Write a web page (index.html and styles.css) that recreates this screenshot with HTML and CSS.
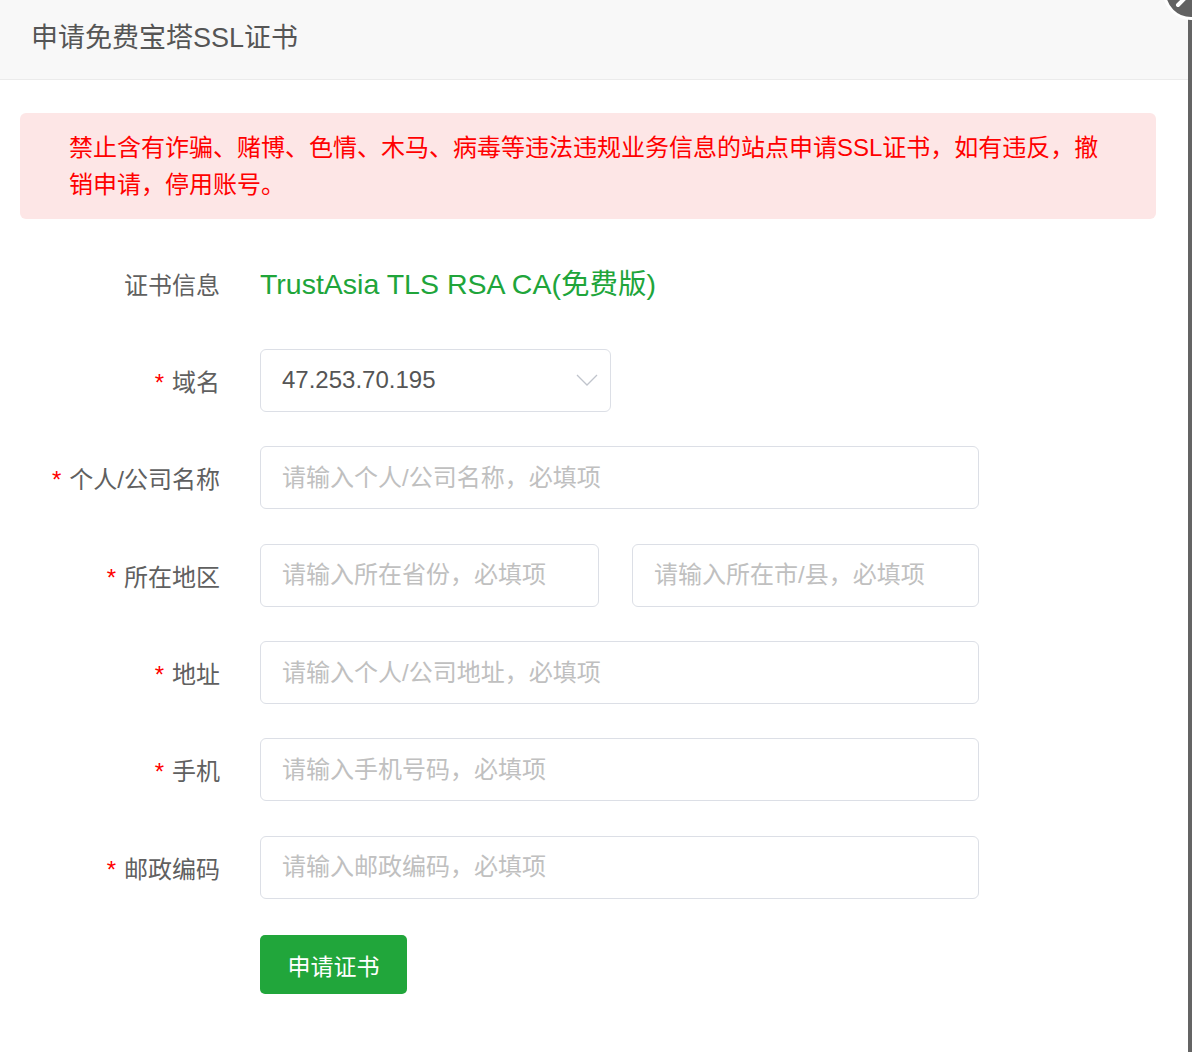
FILE: index.html
```html
<!DOCTYPE html>
<html lang="zh-CN">
<head>
<meta charset="utf-8">
<title>申请免费宝塔SSL证书</title>
<link rel="stylesheet" href="styles.css">
</head>
<body>
<div class="page">
  <div class="dialog">
    <div class="dialog-header">申请免费宝塔SSL证书</div>
    <div class="dialog-body">
      <div class="alert">禁止含有诈骗、赌博、色情、木马、病毒等违法违规业务信息的站点申请SSL证书，如有违反，撤销申请，停用账号。</div>
      <div class="form">
        <div class="row">
          <div class="label">证书信息</div>
          <div class="control"><span class="cert">TrustAsia TLS RSA CA(免费版)</span></div>
        </div>
        <div class="row">
          <div class="label"><span class="req">*</span>域名</div>
          <div class="control">
            <div class="select">
              <span class="select-value">47.253.70.195</span>
              <svg class="chevron" width="22" height="12" viewBox="0 0 22 12"><path d="M1 1 L11 11 L21 1" fill="none" stroke="#c0c4cc" stroke-width="1.3"/></svg>
            </div>
          </div>
        </div>
        <div class="row">
          <div class="label"><span class="req">*</span>个人/公司名称</div>
          <div class="control"><input class="input input-full" placeholder="请输入个人/公司名称，必填项"></div>
        </div>
        <div class="row">
          <div class="label"><span class="req">*</span>所在地区</div>
          <div class="control control-pair">
            <input class="input input-province" placeholder="请输入所在省份，必填项">
            <input class="input input-city" placeholder="请输入所在市/县，必填项">
          </div>
        </div>
        <div class="row">
          <div class="label"><span class="req">*</span>地址</div>
          <div class="control"><input class="input input-full" placeholder="请输入个人/公司地址，必填项"></div>
        </div>
        <div class="row">
          <div class="label"><span class="req">*</span>手机</div>
          <div class="control"><input class="input input-full" placeholder="请输入手机号码，必填项"></div>
        </div>
        <div class="row">
          <div class="label"><span class="req">*</span>邮政编码</div>
          <div class="control"><input class="input input-full" placeholder="请输入邮政编码，必填项"></div>
        </div>
        <div class="row">
          <div class="label"></div>
          <div class="control"><button class="btn">申请证书</button></div>
        </div>
      </div>
    </div>
  </div>
  <div class="backdrop"></div>
  <svg class="close" width="60" height="40" viewBox="0 0 60 40">
    <circle cx="31" cy="-8" r="26.5" fill="#626262" stroke="#ffffff" stroke-width="3"/>
    <path d="M18 5 L31 -8" stroke="#ffffff" stroke-width="4" stroke-linecap="round"/>
  </svg>
</div>
</body>
</html>
```

FILE: styles.css
```css
html, body {
  margin: 0;
  padding: 0;
  background: #ffffff;
}
body {
  font-family: "Liberation Sans", "Noto Sans CJK SC", sans-serif;
  width: 1192px;
  height: 1052px;
  overflow: hidden;
}
.page {
  position: relative;
  display: flex;
  width: 1192px;
  height: 1052px;
}
.dialog {
  width: 1188px;
  background: #ffffff;
  flex: none;
}
.backdrop {
  flex: 1;
  background: #646464;
}
.close {
  position: absolute;
  top: 0;
  left: 1160px;
}
.dialog-header {
  height: 79px;
  line-height: 77px;
  background: #f8f8f8;
  border-bottom: 1px solid #ebebeb;
  padding-left: 31px;
  font-size: 27px;
  color: #555555;
}
.dialog-body {
  padding: 33px 32px 0 20px;
}
.alert {
  background: #fde6e6;
  border-radius: 6px;
  color: #ff0000;
  font-size: 24px;
  line-height: 37px;
  padding: 16px 52px 16px 49px;
}
.form {
  display: flex;
  flex-direction: column;
  gap: 34.4px;
  margin-top: 32.5px;
}
.row {
  display: flex;
  align-items: center;
  height: 63px;
}
.label {
  width: 200px;
  flex: none;
  text-align: right;
  font-size: 24px;
  color: #606060;
  margin-right: 40px;
}
.req {
  color: #ff0000;
  margin-right: 8px;
}
.control {
  display: flex;
  align-items: center;
}
.control-pair {
  gap: 33px;
}
.cert {
  color: #20a53a;
  font-size: 28.5px;
  position: relative;
  top: -2px;
}
.select {
  box-sizing: border-box;
  width: 351px;
  height: 63px;
  border: 1.5px solid #dcdfe6;
  border-radius: 6px;
  display: flex;
  align-items: center;
  justify-content: space-between;
  padding: 0 12px 0 21px;
}
.select-value {
  font-size: 24px;
  color: #555555;
}
.chevron {
  display: block;
}
.input {
  box-sizing: border-box;
  height: 63px;
  border: 1.5px solid #dcdfe6;
  border-radius: 6px;
  padding: 0 20px 0 21px;
  font-family: inherit;
  font-size: 24px;
  color: #555555;
  background: #ffffff;
  outline: none;
}
.input::placeholder {
  color: #c0c0c0;
}
.input-full {
  width: 719px;
}
.input-province {
  width: 339px;
}
.input-city {
  width: 347px;
}
.btn {
  width: 147px;
  height: 59px;
  border: none;
  border-radius: 5px;
  background: #21a63b;
  color: #ffffff;
  font-family: inherit;
  font-size: 23px;
  cursor: pointer;
  padding: 0;
}
```
